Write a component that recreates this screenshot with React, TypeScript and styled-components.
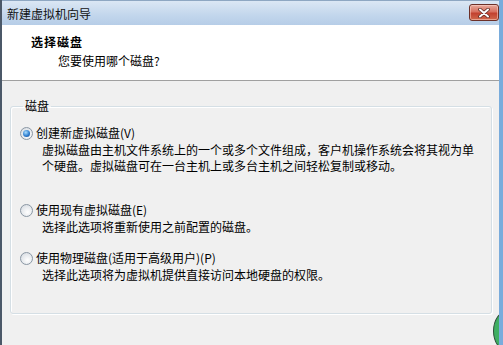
import React from "react";
import styled, { createGlobalStyle } from "styled-components";

const GlobalStyle = createGlobalStyle`
  html, body {
    margin: 0;
    padding: 0;
    background: #f0f0f0;
  }
  body {
    font-family: "Noto Sans CJK SC", "Liberation Sans", sans-serif;
    font-size: 12px;
    color: #000;
  }
`;

const Window = styled.div`
  position: relative;
  width: 503px;
  height: 345px;
  display: flex;
  flex-direction: column;
  box-sizing: border-box;
  border-left: 2px solid #4b5868;
  border-right: 4px solid #79acdc;
  overflow: hidden;
  background: #f0f0f0;
`;

const TitleBar = styled.div`
  height: 25px;
  flex: none;
  display: flex;
  align-items: flex-start;
  justify-content: space-between;
  padding: 5px 0 0 5px;
  background: linear-gradient(#dbe7f4, #c2d6ec 60%, #b6cde7);
  border-top: 1px solid #8ea7c2;
  box-sizing: border-box;
`;

const Title = styled.span`
  font-size: 12px;
  line-height: 16px;
  color: #111;
`;

const CloseButton = styled.div`
  width: 30px;
  height: 17px;
  margin-top: -2px;
  border: 1px solid #6c3028;
  border-radius: 3px;
  box-sizing: border-box;
  display: flex;
  align-items: center;
  justify-content: center;
  background: linear-gradient(#e7a99c, #d7705f 45%, #c2412f 55%, #d0694c);
  box-shadow: inset 0 0 0 1px rgba(255, 220, 210, 0.5);
`;

const Header = styled.div`
  height: 56px;
  flex: none;
  background: #fff;
  border-bottom: 1px solid #a0a0a0;
  box-sizing: border-box;
  padding: 8px 0 0 29px;
`;

const Heading = styled.div`
  font-weight: bold;
  font-size: 12px;
  line-height: 18px;
  letter-spacing: 1px;
`;

const SubHeading = styled.div`
  margin-top: 1px;
  padding-left: 27px;
  line-height: 18px;
`;

const Body = styled.div`
  flex: 1;
  padding: 17px 7px 0 8px;
`;

const Group = styled.fieldset`
  margin: 0;
  height: 216px;
  box-sizing: border-box;
  border: 1px solid #d5dfe5;
  border-radius: 3px;
  box-shadow: inset 1px 1px 0 #fff, 1px 1px 0 #fff;
  padding: 11px 0 0 9px;
`;

const Legend = styled.legend`
  padding: 0 2px;
  margin-left: 3px;
  line-height: 16px;
`;

const Option = styled.div<{ gap: number }>`
  margin-top: ${(p) => p.gap}px;
`;

const OptionRow = styled.label`
  display: flex;
  align-items: center;
  gap: 3px;
  line-height: 16px;
`;

const Radio = styled.span<{ checked?: boolean }>`
  width: 13px;
  height: 13px;
  box-sizing: border-box;
  border-radius: 50%;
  border: 1px solid #8a97a4;
  background: radial-gradient(circle at 60% 65%, #ffffff, #dfe3e8 70%, #c7ccd3);
  display: flex;
  align-items: center;
  justify-content: center;
  &::after {
    content: "";
    display: ${(p) => (p.checked ? "block" : "none")};
    width: 7px;
    height: 7px;
    border-radius: 50%;
    background: radial-gradient(circle at 40% 35%, #a9ddff, #2f7fd0 55%, #12408a);
  }
`;

const Desc = styled.div`
  padding-left: 22px;
  line-height: 16px;
  white-space: nowrap;
  &:first-of-type {
    margin-top: 1px;
  }
`;

const Orb = styled.div`
  position: absolute;
  right: -22px;
  bottom: -6px;
  width: 26px;
  height: 38px;
  border-radius: 50%;
  border: 1px solid #2e4d39;
  background: #3fae62;
`;

const options = [
  {
    label: "创建新虚拟磁盘(V)",
    lines: [
      "虚拟磁盘由主机文件系统上的一个或多个文件组成，客户机操作系统会将其视为单",
      "个硬盘。虚拟磁盘可在一台主机上或多台主机之间轻松复制或移动。",
    ],
    checked: true,
    gap: 0,
  },
  {
    label: "使用现有虚拟磁盘(E)",
    lines: ["选择此选项将重新使用之前配置的磁盘。"],
    checked: false,
    gap: 28,
  },
  {
    label: "使用物理磁盘(适用于高级用户)(P)",
    lines: ["选择此选项将为虚拟机提供直接访问本地硬盘的权限。"],
    checked: false,
    gap: 15,
  },
];

const App: React.FC = () => {
  return (
    <>
      <GlobalStyle />
      <Window>
        <TitleBar>
          <Title>新建虚拟机向导</Title>
          <CloseButton>
            <svg width="12" height="10" viewBox="0 0 12 10">
              <path
                d="M2 1.5 L10 8.5 M10 1.5 L2 8.5"
                stroke="#5a2a22"
                strokeWidth="3.6"
                strokeLinecap="round"
              />
              <path
                d="M2 1.5 L10 8.5 M10 1.5 L2 8.5"
                stroke="#fff"
                strokeWidth="2"
                strokeLinecap="round"
              />
            </svg>
          </CloseButton>
        </TitleBar>
        <Header>
          <Heading>选择磁盘</Heading>
          <SubHeading>您要使用哪个磁盘?</SubHeading>
        </Header>
        <Body>
          <Group>
            <Legend>磁盘</Legend>
            {options.map((o, i) => (
              <Option key={i} gap={o.gap}>
                <OptionRow>
                  <Radio checked={o.checked} />
                  {o.label}
                </OptionRow>
                {o.lines.map((l, j) => (
                  <Desc key={j}>{l}</Desc>
                ))}
              </Option>
            ))}
          </Group>
        </Body>
        <Orb />
      </Window>
    </>
  );
};

export default App;
